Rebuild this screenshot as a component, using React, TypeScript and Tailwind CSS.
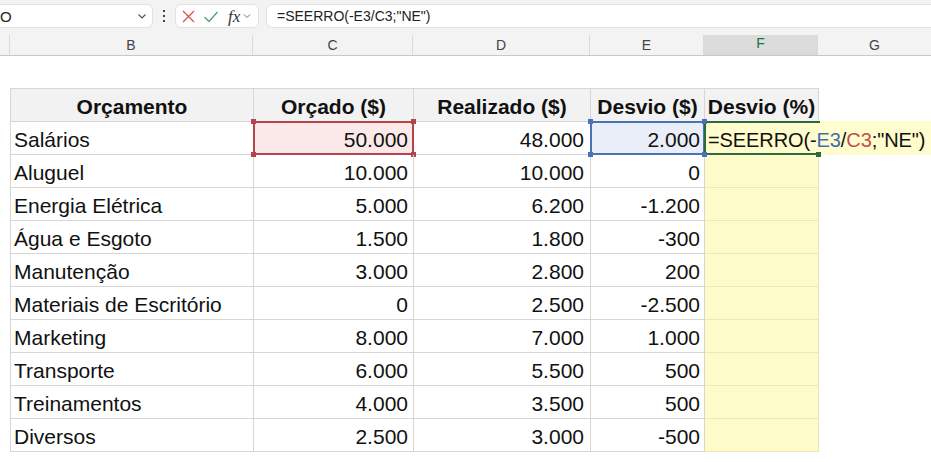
import React from 'react';

const rows = [
  ['Salários', '50.000', '48.000', '2.000'],
  ['Aluguel', '10.000', '10.000', '0'],
  ['Energia Elétrica', '5.000', '6.200', '-1.200'],
  ['Água e Esgoto', '1.500', '1.800', '-300'],
  ['Manutenção', '3.000', '2.800', '200'],
  ['Materiais de Escritório', '0', '2.500', '-2.500'],
  ['Marketing', '8.000', '7.000', '1.000'],
  ['Transporte', '6.000', '5.500', '500'],
  ['Treinamentos', '4.000', '3.500', '500'],
  ['Diversos', '2.500', '3.000', '-500'],
];

const cols = [
  { key: 'A', w: 'w-[10px]' },
  { key: 'B', w: 'w-[243px]' },
  { key: 'C', w: 'w-[160px]' },
  { key: 'D', w: 'w-[177px]' },
  { key: 'E', w: 'w-[114px]' },
  { key: 'F', w: 'w-[114px]' },
  { key: 'G', w: 'w-[113px]' },
];

// small square on the corner of a selection
function Handle({ pos, color }: { pos: string; color: string }) {
  return <span className={`absolute w-[5px] h-[5px] ${pos} ${color}`} />;
}

function Toolbar() {
  return (
    <div className="h-[35px] bg-[#f3f3f3] flex items-start pt-[4px] font-['Liberation_Sans',sans-serif]">
      {/* caixa de nome */}
      <div className="w-[153px] h-[24px] bg-white border border-l-0 border-[#e2e2e2] rounded-r-md flex items-center justify-between pr-[4px]">
        <span className="text-[15px] text-[#222] leading-none">O</span>
        <svg width="12" height="12" viewBox="0 0 12 12" fill="none" stroke="#555" strokeWidth="1.2">
          <path d="M2.5 4.5 6 8l3.5-3.5" />
        </svg>
      </div>
      <div className="w-[22px] h-[24px] flex flex-col items-center justify-center gap-[3px]">
        <span className="w-[2px] h-[2px] bg-[#444]" />
        <span className="w-[2px] h-[2px] bg-[#444]" />
        <span className="w-[2px] h-[2px] bg-[#444]" />
      </div>
      {/* botões cancelar / confirmar / fx */}
      <div className="w-[84px] h-[24px] bg-white border border-[#e2e2e2] rounded-md flex items-center pl-[5px] gap-[7px]">
        <svg width="15" height="15" viewBox="0 0 15 15" fill="none" stroke="#d9534f" strokeWidth="1.3">
          <path d="M2 2l11 11M13 2 2 13" />
        </svg>
        <svg width="16" height="15" viewBox="0 0 16 15" fill="none" stroke="#4ea36a" strokeWidth="1.3">
          <path d="M1.5 8 6 12.5 14.5 3" />
        </svg>
        <div className="flex items-center gap-[2px]">
          <span className="font-['Liberation_Serif',serif] italic text-[17px] leading-none text-[#333] ml-[2px]">fx</span>
          <svg width="10" height="10" viewBox="0 0 10 10" fill="none" stroke="#777" strokeWidth="1">
            <path d="M2 3.5 5 6.5l3-3" />
          </svg>
        </div>
      </div>
      {/* barra de fórmulas */}
      <div className="flex-1 ml-[7px] h-[24px] bg-white border border-r-0 border-[#e2e2e2] rounded-l-md flex items-center pl-[10px]">
        <span className="text-[14px] text-[#222]">=SEERRO(-E3/C3;"NE")</span>
      </div>
    </div>
  );
}

function ColumnHeaders() {
  return (
    <div className="flex h-[21px] bg-[#f3f3f3] border-b border-[#c8c8c8] font-['Liberation_Sans',sans-serif]">
      {cols.map((c, i) => (
        <div
          key={c.key}
          className={`${c.w} h-full flex items-center justify-center text-[14px] ${
            c.key === 'F'
              ? 'bg-[#dcdcdc] text-[#217346] border-b-[3px] border-[#217346] -mb-px'
              : 'text-[#444]'
          } ${i < cols.length - 1 ? 'border-r border-[#dadada]' : ''}`}
        >
          {c.key === 'A' ? '' : c.key}
        </div>
      ))}
    </div>
  );
}

export default function App() {
  const cell = 'h-[33px] border-r border-b border-[#d6d6d6] flex items-center pt-[3px]';
  return (
    <div className="w-[931px] h-[462px] overflow-hidden bg-white font-['Liberation_Sans',sans-serif] text-[#111]">
      <Toolbar />
      <ColumnHeaders />
      <div className="h-[32px]" />
      <div className="flex">
        <div className="w-[10px] shrink-0" />
        <div>
          {/* cabeçalho da tabela */}
          <div className="flex border-t border-l border-[#d6d6d6] bg-[#f2f2f2] text-[21px] font-bold">
            <div className={`${cell} w-[243px] justify-center`}>Orçamento</div>
            <div className={`${cell} w-[160px] justify-center`}>Orçado ($)</div>
            <div className={`${cell} w-[177px] justify-center`}>Realizado ($)</div>
            <div className={`${cell} w-[114px] justify-center`}>Desvio ($)</div>
            <div className={`${cell} w-[114px] justify-center`}>Desvio (%)</div>
          </div>
          {rows.map((r, i) => (
            <div key={r[0]} className="flex border-l border-[#d6d6d6] text-[21px]">
              <div className={`${cell} w-[243px] pl-[3px]`}>{r[0]}</div>
              <div className={`${cell} w-[160px] justify-end pr-[5px] relative ${i === 0 ? 'bg-[#fbe9ea]' : ''}`}>
                {r[1]}
                {i === 0 && (
                  <>
                    <span className="absolute -top-px -left-px -right-px -bottom-px border-2 border-[#b4434b]" />
                    <Handle pos="-top-[3px] -left-[3px]" color="bg-[#b4434b]" />
                    <Handle pos="-top-[3px] -right-[3px]" color="bg-[#b4434b]" />
                    <Handle pos="-bottom-[3px] -left-[3px]" color="bg-[#b4434b]" />
                    <Handle pos="-bottom-[3px] -right-[3px]" color="bg-[#b4434b]" />
                  </>
                )}
              </div>
              <div className={`${cell} w-[177px] justify-end pr-[6px]`}>{r[2]}</div>
              <div className={`${cell} w-[114px] justify-end pr-[4px] relative ${i === 0 ? 'bg-[#e9eef8]' : ''}`}>
                {r[3]}
                {i === 0 && (
                  <>
                    <span className="absolute -top-px -left-px -right-px -bottom-px border-2 border-[#4a72b6]" />
                    <Handle pos="-top-[3px] -left-[3px]" color="bg-[#4a72b6]" />
                    <Handle pos="-top-[3px] -right-[3px]" color="bg-[#4a72b6]" />
                    <Handle pos="-bottom-[3px] -left-[3px]" color="bg-[#4a72b6]" />
                    <Handle pos="-bottom-[3px] -right-[3px]" color="bg-[#4a72b6]" />
                  </>
                )}
              </div>
              <div className={`${cell} w-[114px] bg-[#fefbcb] border-[#ece7b8] relative`}>
                {i === 0 && (
                  <>
                    {/* célula em edição, o texto transborda para G */}
                    <div className="absolute -top-px -left-px w-[228px] -bottom-px bg-[#fffccd] flex items-center pt-[3px] pl-[4px] whitespace-nowrap z-10 text-[20px] tracking-[-0.1px]">
                      <span>=SEERRO(-</span>
                      <span className="text-[#3f6fb5]">E3</span>
                      <span>/</span>
                      <span className="text-[#c0504d]">C3</span>
                      <span>;"NE")</span>
                    </div>
                    <span className="absolute -top-px -left-px w-[116px] -bottom-px border-2 border-r-0 border-[#2d6b3c] z-20" />
                    <Handle pos="-bottom-[3px] -right-[3px] z-30" color="bg-[#2d6b3c]" />
                    <Handle pos="-top-[3px] -left-[3px] z-30" color="bg-[#4a72b6]" />
                    <Handle pos="-bottom-[3px] -left-[3px] z-30" color="bg-[#4a72b6]" />
                  </>
                )}
              </div>
            </div>
          ))}
        </div>
      </div>
    </div>
  );
}
